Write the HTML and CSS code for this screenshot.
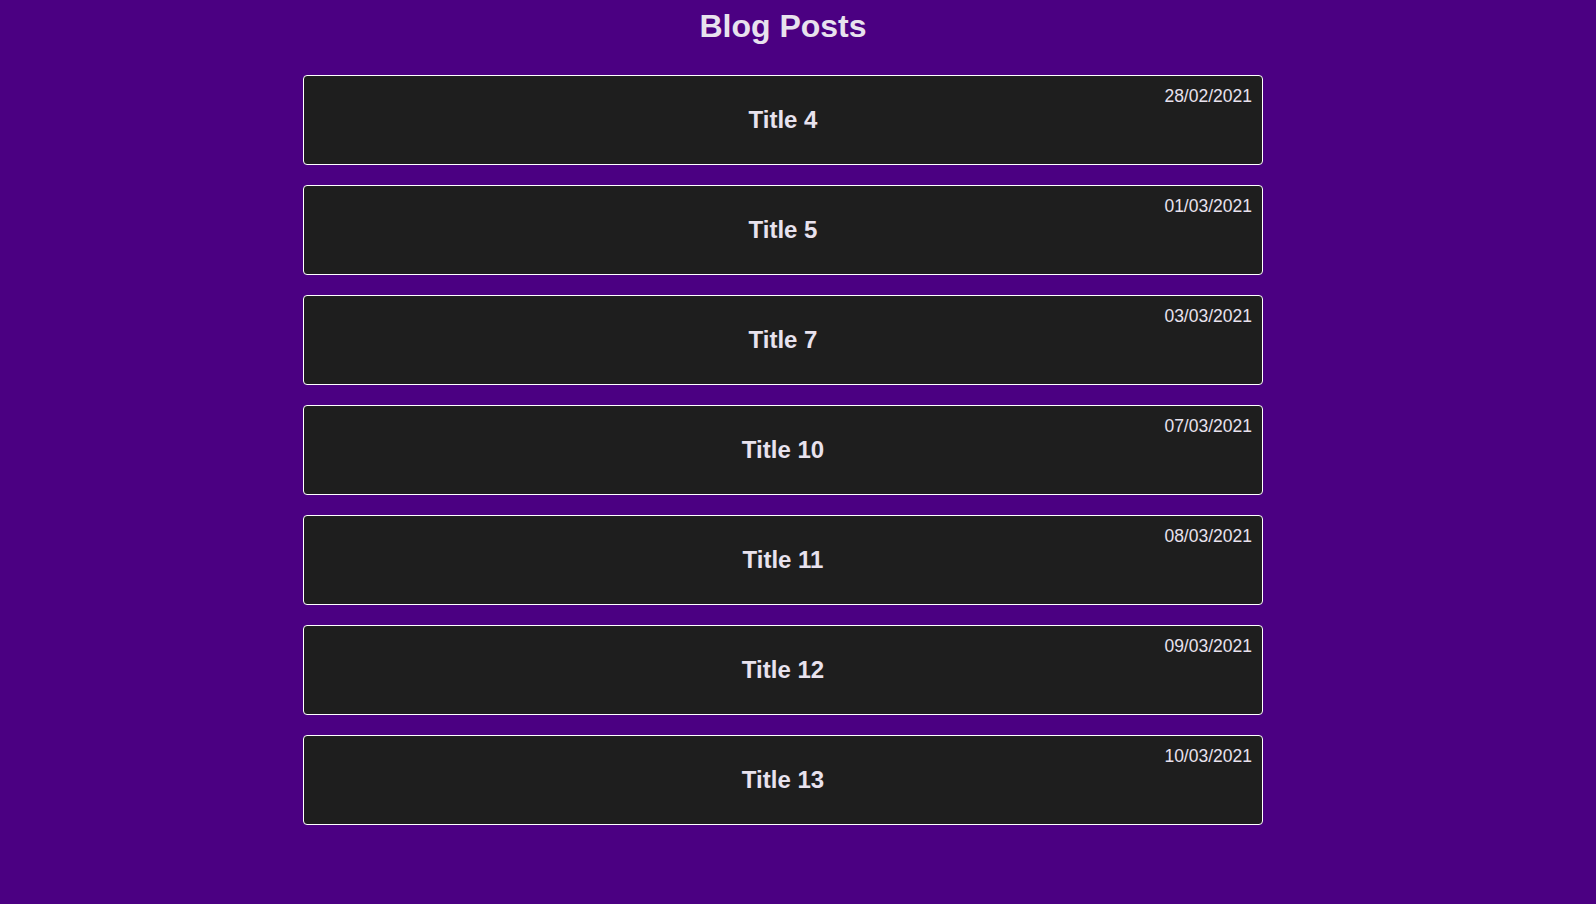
FILE: index.html
```html
<!DOCTYPE html>
<html>
<head>
<meta charset="utf-8">
<title>Blog Posts</title>
<link rel="stylesheet" href="styles.css">
</head>
<body>
<main class="page">
  <h1 class="page-title">Blog Posts</h1>
  <ul class="post-list">
    <li class="post-card"><h2 class="post-title">Title 4</h2><span class="post-date">28/02/2021</span></li>
    <li class="post-card"><h2 class="post-title">Title 5</h2><span class="post-date">01/03/2021</span></li>
    <li class="post-card"><h2 class="post-title">Title 7</h2><span class="post-date">03/03/2021</span></li>
    <li class="post-card"><h2 class="post-title">Title 10</h2><span class="post-date">07/03/2021</span></li>
    <li class="post-card"><h2 class="post-title">Title 11</h2><span class="post-date">08/03/2021</span></li>
    <li class="post-card"><h2 class="post-title">Title 12</h2><span class="post-date">09/03/2021</span></li>
    <li class="post-card"><h2 class="post-title">Title 13</h2><span class="post-date">10/03/2021</span></li>
  </ul>
</main>
</body>
</html>
```
FILE: styles.css
```css
html, body {
  margin: 0;
  padding: 0;
  background: #4b0082;
  min-height: 100%;
}
body {
  font-family: "Liberation Sans", Arial, sans-serif;
  color: #e8e2ee;
}
.page {
  width: 960px;
  margin-left: 303px;
  padding-top: 8px;
}
.page-title {
  margin: 0 0 30px;
  font-size: 32px;
  font-weight: bold;
  text-align: center;
  line-height: 37px;
}
.post-list {
  list-style: none;
  margin: 0;
  padding: 0;
  display: flex;
  flex-direction: column;
  gap: 20px;
}
.post-card {
  position: relative;
  box-sizing: border-box;
  height: 90px;
  background: #1e1e1e;
  border: 1px solid #ffffff;
  border-radius: 4px;
  display: flex;
  align-items: center;
  justify-content: center;
}
.post-title {
  margin: 0;
  font-size: 24px;
  font-weight: bold;
  line-height: 28px;
}
.post-date {
  position: absolute;
  top: 10px;
  right: 10px;
  font-size: 17.5px;
  line-height: 20px;
}
```
